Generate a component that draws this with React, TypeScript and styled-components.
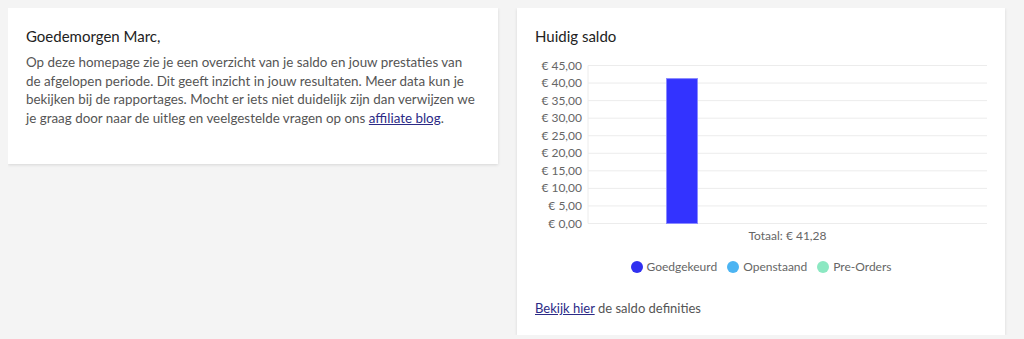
import React from 'react';
import styled, { createGlobalStyle } from 'styled-components';

const GlobalStyle = createGlobalStyle`
    body {
        margin: 8px;
        background: #f4f4f4;
        font-family: 'Lato', 'Liberation Sans', sans-serif;
        color: #555;
    }
`;

const Page = styled.div`
    display: flex;
    align-items: flex-start;
    gap: 19px;
`;

const Card = styled.div<{ $width: number }>`
    width: ${(p) => p.$width}px;
    box-sizing: border-box;
    background: #fff;
    padding: 18px 18px 17px;
    box-shadow: 0 1px 3px rgba(0, 0, 0, 0.12);
`;

const WelcomeCard = styled(Card)`
    min-height: 156px;
`;

const Title = styled.h3`
    margin: 0 0 7px;
    font-size: 15px;
    font-weight: 400;
    color: #222;
    line-height: 20px;
`;

const Text = styled.p<{ $size?: number }>`
    margin: 0;
    font-size: ${(p) => p.$size ?? 13}px;
    line-height: 18.5px;
    color: #555;
    white-space: nowrap;
`;

const Link = styled.a`
    color: #2b2a86;
    text-decoration: underline;
`;

const ChartBox = styled.div`
    margin-top: 2px;
`;

const Legend = styled.div`
    display: flex;
    justify-content: center;
    gap: 10px;
    margin-top: 14px;
`;

const LegendItem = styled.div`
    display: flex;
    align-items: center;
    gap: 4px;
    font-size: 12px;
    color: #666;
`;

const Dot = styled.span<{ $color: string }>`
    width: 12px;
    height: 12px;
    border-radius: 50%;
    background: ${(p) => p.$color};
`;

const Footer = styled(Text)`
    margin-top: 25px;
`;

const ticks = [45, 40, 35, 30, 25, 20, 15, 10, 5, 0];
const value = 41.28;

const BalanceChart: React.FC = () => {
    const top = 12.5;
    const bottom = 170.5;
    const left = 53;
    const right = 452;
    const y = (v: number) => bottom - ((bottom - top) * v) / 45;
    return (
        <svg width={452} height={192} style={{ display: 'block' }}>
            {ticks.map((t) => (
                <g key={t}>
                    <line x1={left} x2={right} y1={y(t)} y2={y(t)} stroke="#ececec" strokeWidth={1} />
                    <text
                        x={47}
                        y={y(t) + 4}
                        textAnchor="end"
                        fontSize={12}
                        fill="#666"
                        fontFamily="Lato, 'Liberation Sans', sans-serif"
                    >
                        € {t},00
                    </text>
                </g>
            ))}
            <line x1={left} x2={left} y1={top} y2={bottom} stroke="#ececec" />
            <rect
                x={131.5}
                y={y(value)}
                width={31}
                height={bottom - y(value)}
                fill="#3333ff"
                stroke="#8a8aff"
                strokeWidth={1}
            />
            <text
                x={(left + right) / 2}
                y={187}
                textAnchor="middle"
                fontSize={12}
                fill="#666"
                fontFamily="Lato, 'Liberation Sans', sans-serif"
            >
                Totaal: € 41,28
            </text>
        </svg>
    );
};

const App: React.FC = () => {
    return (
        <>
            <GlobalStyle />
            <Page>
                <WelcomeCard $width={490}>
                    <Title>Goedemorgen Marc,</Title>
                    <Text $size={13.4}>
                        Op deze homepage zie je een overzicht van je saldo en jouw prestaties van
                        <br />
                        de afgelopen periode. Dit geeft inzicht in jouw resultaten. Meer data kun je
                        <br />
                        bekijken bij de rapportages. Mocht er iets niet duidelijk zijn dan verwijzen we
                        <br />
                        je graag door naar de uitleg en veelgestelde vragen op ons{' '}
                        <Link href="#">affiliate blog</Link>.
                    </Text>
                </WelcomeCard>
                <Card $width={488}>
                    <Title>Huidig saldo</Title>
                    <ChartBox>
                        <BalanceChart />
                    </ChartBox>
                    <Legend>
                        <LegendItem>
                            <Dot $color="#3030f0" />
                            Goedgekeurd
                        </LegendItem>
                        <LegendItem>
                            <Dot $color="#4cb4f2" />
                            Openstaand
                        </LegendItem>
                        <LegendItem>
                            <Dot $color="#8ce8c2" />
                            Pre-Orders
                        </LegendItem>
                    </Legend>
                    <Footer>
                        <Link href="#">Bekijk hier</Link> de saldo definities
                    </Footer>
                </Card>
            </Page>
        </>
    );
};

export default App;
